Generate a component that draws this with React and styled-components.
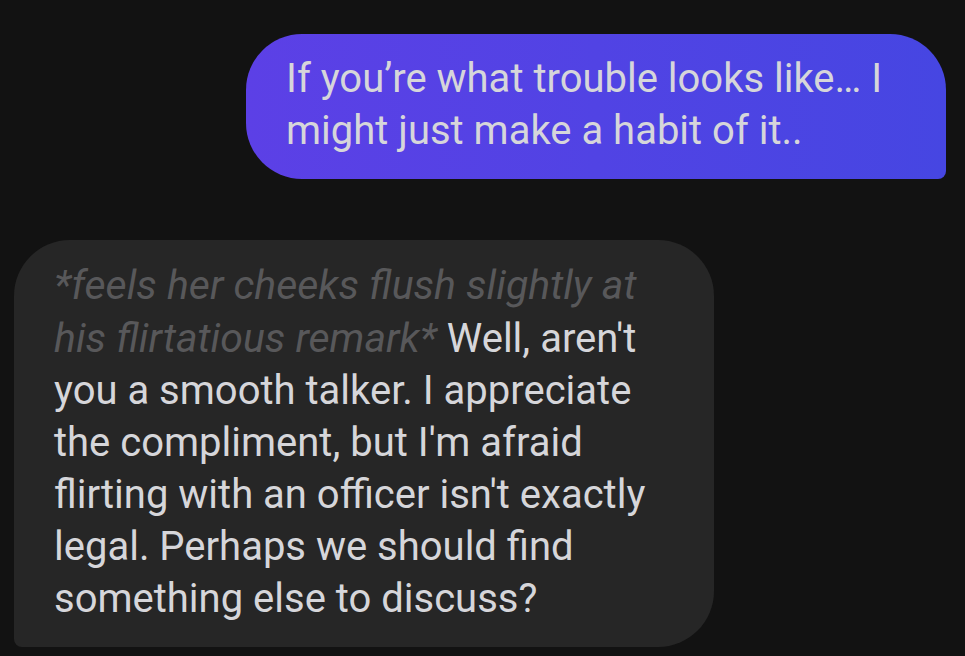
import styled, { createGlobalStyle } from "styled-components";

const GlobalStyle = createGlobalStyle`
  html, body {
    margin: 0;
    background: #121212;
  }
  body {
    font-family: Roboto, "Noto Sans", sans-serif;
  }
`;

const Thread = styled.div`
  display: flex;
  flex-direction: column;
  gap: 61px;
  padding: 34px 19px 0 14px;
  height: 656px;
  box-sizing: border-box;
  overflow: hidden;
`;

const Bubble = styled.div`
  max-width: 700px;
  box-sizing: border-box;
  padding: 19px 40px 22px;
  font-size: 40px;
  line-height: 52px;
  color: #d6d6da;
  border-radius: 56px;
  align-self: ${(p) => (p.$mine ? "flex-end" : "flex-start")};
  background: ${(p) =>
    p.$mine ? "linear-gradient(90deg, #5c40e6 0%, #4646e2 100%)" : "#262626"};
  ${(p) =>
    p.$mine ? "border-bottom-right-radius: 8px;" : "border-bottom-left-radius: 8px;"}
`;

const Action = styled.em`
  color: #58585a;
  font-size: 41px;
`;

const messages = [
  { mine: true, parts: [{ text: "If you’re what trouble looks like… I might just make a habit of it.." }] },
  {
    mine: false,
    parts: [
      { action: true, text: "*feels her cheeks flush slightly at his flirtatious remark*" },
      {
        text: " Well, aren't you a smooth talker. I appreciate the compliment, but I'm afraid flirting with an officer isn't exactly legal. Perhaps we should find something else to discuss?",
      },
    ],
  },
];

export default function App() {
  return (
    <>
      <GlobalStyle />
      <Thread>
        {messages.map((m, i) => (
          <Bubble key={i} $mine={m.mine}>
            {m.parts.map((p, j) =>
              p.action ? <Action key={j}>{p.text}</Action> : <span key={j}>{p.text}</span>
            )}
          </Bubble>
        ))}
      </Thread>
    </>
  );
}
